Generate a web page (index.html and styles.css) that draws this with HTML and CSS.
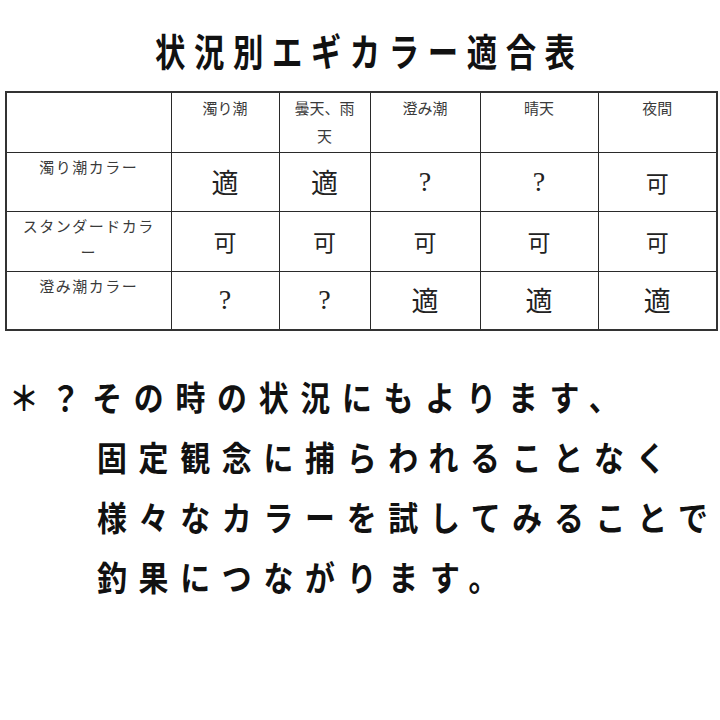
FILE: index.html
```html
<!DOCTYPE html>
<html lang="ja">
<head>
<meta charset="utf-8">
<title>状況別エギカラー適合表</title>
<link rel="stylesheet" href="styles.css">
</head>
<body>
<div class="page">
  <h1 class="title"><span class="title-text">状況別エギカラー適合表</span></h1>
  <table class="chart">
    <colgroup>
      <col class="c0"><col class="c1"><col class="c2"><col class="c3"><col class="c4"><col class="c5">
    </colgroup>
    <tr class="head">
      <th></th>
      <th>濁り潮</th>
      <th>曇天、雨<br>天</th>
      <th>澄み潮</th>
      <th>晴天</th>
      <th>夜間</th>
    </tr>
    <tr class="r1">
      <th class="label">濁り潮カラー</th>
      <td class="v fit">適</td>
      <td class="v fit">適</td>
      <td class="v q">?</td>
      <td class="v q">?</td>
      <td class="v ok">可</td>
    </tr>
    <tr class="r2">
      <th class="label">スタンダードカラ<br>ー</th>
      <td class="v ok">可</td>
      <td class="v ok">可</td>
      <td class="v ok">可</td>
      <td class="v ok">可</td>
      <td class="v ok">可</td>
    </tr>
    <tr class="r3">
      <th class="label">澄み潮カラー</th>
      <td class="v q">?</td>
      <td class="v q">?</td>
      <td class="v fit">適</td>
      <td class="v fit">適</td>
      <td class="v fit">適</td>
    </tr>
  </table>
  <div class="notes">
    <div class="line first">＊？その時の状況にもよります、</div>
    <div class="line">固定観念に捕らわれることなく</div>
    <div class="line">様々なカラーを試してみることで</div>
    <div class="line">釣果につながります。</div>
  </div>
</div>
</body>
</html>
```
FILE: styles.css
```css
html, body {
  margin: 0;
  padding: 0;
  background: #ffffff;
}
body {
  font-family: "Noto Sans CJK JP", "Noto Sans", sans-serif;
  color: #111;
}
.page {
  width: 720px;
  height: 720px;
  overflow: hidden;
}
.title {
  margin: 30px 0 0 0;
  font-size: 38px;
  line-height: 40px;
  font-weight: 700;
  text-align: left;
  color: #111;
  white-space: nowrap;
}
.title-text {
  display: inline-block;
  margin-left: 155px;
  letter-spacing: 10.7px;
  transform: scaleX(0.8);
  transform-origin: 0 50%;
}
.chart {
  margin: 21px 0 0 5px;
  width: 711px;
  border-collapse: collapse;
  table-layout: fixed;
  border: 2px solid #333;
}
.c0 { width: 165px; }
.c1 { width: 108px; }
.c2 { width: 91px; }
.c3 { width: 110px; }
.c4 { width: 118px; }
.c5 { width: 119px; }
.chart th,
.chart td {
  border: 1px solid #2a2a2a;
  padding: 0;
  text-align: center;
}
.chart th {
  font-weight: 400;
  font-size: 15px;
  line-height: 28px;
  color: #3a3a3a;
  vertical-align: top;
  padding-top: 1px;
}
.chart th.label {
  letter-spacing: 1.5px;
  line-height: 26px;
}
.head { height: 60px; }
.r1 { height: 59px; }
.r2 { height: 60px; }
.r3 { height: 59px; }
.v {
  vertical-align: middle;
  color: #222;
}
.fit {
  font-size: 27px;
  line-height: 30px;
  padding-top: 2px;
}
.ok {
  font-size: 23px;
  line-height: 30px;
}
.q {
  font-family: "Liberation Serif", serif;
  font-size: 28px;
  line-height: 30px;
}
.notes {
  margin-top: 36px;
}
.line {
  font-size: 34px;
  line-height: 60px;
  height: 60px;
  font-weight: 700;
  letter-spacing: 13.3px;
  white-space: nowrap;
  padding-left: 97px;
  color: #111;
  transform: scaleX(0.88);
  transform-origin: 97px 50%;
}
.line.first {
  padding-left: 9px;
  transform-origin: 9px 50%;
}
```
